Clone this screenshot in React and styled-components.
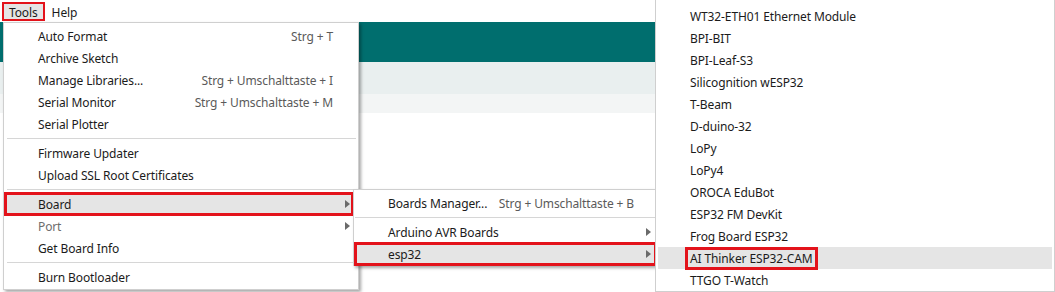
import React from "react";
import styled, { createGlobalStyle, css } from "styled-components";

const GlobalStyle = createGlobalStyle`
  html, body { margin: 0; padding: 0; background: #ffffff; }
  body { font-family: "Noto Sans", "Open Sans", sans-serif; font-size: 12px; letter-spacing: -0.12px; color: #1b1b1b; }
  * { box-sizing: border-box; }
`;

const RED = "#e3131b";

const Page = styled.div`
  position: relative;
  width: 1055px;
  height: 292px;
  overflow: hidden;
  background: #fff;
`;

const MenuBar = styled.div`
  display: flex;
  align-items: flex-start;
  height: 22px;
  padding: 2px 0 0 2px;
  background: #fff;
`;

const MenuTitle = styled.div`
  height: 19px;
  line-height: 17px;
  padding: 0 5px;
  border: 2px solid transparent;
  ${(p) => p.$open && css`
    background: #e5e5e5;
    border-color: ${RED};
  `}
`;

const Workspace = styled.div`
  display: flex;
  flex-direction: column;
`;

const Header = styled.div`
  height: 40px;
  background: #006e6e;
`;

const Toolbar = styled.div`
  height: 32px;
  background: #e9efef;
  display: flex;
  align-items: center;
  overflow: hidden;
`;

const ToolbarText = styled.span`
  margin-left: -9px;
  color: #333;
`;

const TabStrip = styled.div`
  height: 19px;
  background: #f3f5f5;
`;

const Editor = styled.div`
  height: 180px;
  background: #fff;
`;

const Menu = styled.div`
  position: absolute;
  left: ${(p) => p.$left}px;
  top: ${(p) => p.$top}px;
  width: ${(p) => p.$width}px;
  background: #fff;
  border: 1px solid #cfcfcf;
  padding: ${(p) => p.$pad || "2px 0 1px"};
  box-shadow: ${(p) => (p.$shadow ? "2px 2px 3px rgba(0,0,0,0.35)" : "none")};
  display: flex;
  flex-direction: column;
`;

const Row = styled.div`
  position: relative;
  display: flex;
  align-items: center;
  height: 22px;
  margin: ${(p) => p.$margin || "0"};
  padding-left: ${(p) => p.$indent}px;
  color: ${(p) => (p.$disabled ? "#6d6d6d" : "#1b1b1b")};
  white-space: nowrap;
  ${(p) => p.$active && css`background: #e5e5e5;`}
  ${(p) => p.$marked && css`box-shadow: 0 0 0 1px ${RED}, inset 0 0 0 2px ${RED};`}
`;

const Label = styled.span`
  flex: 1;
`;

const MarkedLabel = styled.span`
  height: 23px;
  line-height: 17px;
  padding: 0 2px;
  margin-left: -5px;
  border: 3px solid ${RED};
`;

const Shortcut = styled.span`
  color: #5a5a5a;
  margin-right: ${(p) => p.$gap}px;
`;

const Arrow = styled.span`
  width: ${(p) => p.$w}px;
  display: flex;
  justify-content: center;
  &::before {
    content: "";
    border-left: 5px solid #6a6a6a;
    border-top: 4px solid transparent;
    border-bottom: 4px solid transparent;
  }
`;

const Separator = styled.div`
  height: 1px;
  background: #d6d6d6;
  margin: ${(p) => p.$margin};
`;

const toolsItems = [
  { label: "Auto Format", shortcut: "Strg + T" },
  { label: "Archive Sketch" },
  { label: "Manage Libraries...", shortcut: "Strg + Umschalttaste + I" },
  { label: "Serial Monitor", shortcut: "Strg + Umschalttaste + M" },
  { label: "Serial Plotter" },
  { sep: true },
  { label: "Firmware Updater" },
  { label: "Upload SSL Root Certificates" },
  { sep: true },
  { label: "Board", sub: true, active: true },
  { label: "Port", sub: true, disabled: true },
  { label: "Get Board Info" },
  { sep: true },
  { label: "Burn Bootloader" },
];

const boards = [
  "WT32-ETH01 Ethernet Module",
  "BPI-BIT",
  "BPI-Leaf-S3",
  "Silicognition wESP32",
  "T-Beam",
  "D-duino-32",
  "LoPy",
  "LoPy4",
  "OROCA EduBot",
  "ESP32 FM DevKit",
  "Frog Board ESP32",
  "AI Thinker ESP32-CAM",
  "TTGO T-Watch",
];

export default function App() {
  return (
    <Page>
      <GlobalStyle />
      <MenuBar>
        <MenuTitle $open>Tools</MenuTitle>
        <MenuTitle>Help</MenuTitle>
      </MenuBar>
      <Workspace>
        <Header />
        <Toolbar>
          <ToolbarText>e</ToolbarText>
        </Toolbar>
        <TabStrip />
        <Editor />
      </Workspace>

      <Menu $left={3} $top={22} $width={356} $shadow $pad="2px 0 1px">
        {toolsItems.map((it, i) =>
          it.sep ? (
            <Separator key={i} $margin="3px 2px 3px 3px" />
          ) : (
            <Row
              key={i}
              $indent={33}
              $margin="0 5px 0 1px"
              $active={it.active}
              $marked={it.active}
              $disabled={it.disabled}
            >
              <Label>{it.label}</Label>
              {it.shortcut && <Shortcut $gap={20}>{it.shortcut}</Shortcut>}
              {it.sub && <Arrow $w={12} />}
            </Row>
          )
        )}
      </Menu>

      <Menu $left={353} $top={189} $width={303} $shadow $pad="2px 0 0">
        <Row $indent={33} $margin="0 0 0 1px">
          <Label>Boards Manager...</Label>
          <Shortcut $gap={21}>Strg + Umschalttaste + B</Shortcut>
        </Row>
        <Separator $margin="3px 0 3px 1px" />
        <Row $indent={33} $margin="0 0 0 1px">
          <Label>Arduino AVR Boards</Label>
          <Arrow $w={14} />
        </Row>
        <Row $indent={33} $margin="0 -1px 0 1px" $active $marked>
          <Label>esp32</Label>
          <Arrow $w={15} />
        </Row>
      </Menu>

      <Menu $left={655} $top={-1} $width={400} $pad="5px 0 0">
        {boards.map((b) =>
          b === "AI Thinker ESP32-CAM" ? (
            <Row key={b} $indent={32} $margin="0 2px" $active>
              <MarkedLabel>{b}</MarkedLabel>
            </Row>
          ) : (
            <Row key={b} $indent={32} $margin="0 2px">
              <Label>{b}</Label>
            </Row>
          )
        )}
      </Menu>
    </Page>
  );
}
